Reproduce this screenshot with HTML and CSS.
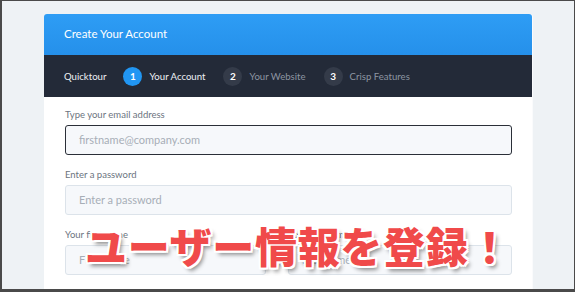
FILE: index.html
```html
<!DOCTYPE html>
<html lang="ja">
<head>
<meta charset="utf-8">
<link rel="stylesheet" href="styles.css">
</head>
<body>
<div class="frame">
  <div class="card">
    <div class="card-head">Create Your Account</div>
    <nav class="steps">
      <span class="step-title">Quicktour</span>
      <span class="step active"><span class="num">1</span>Your Account</span>
      <span class="step"><span class="num">2</span>Your Website</span>
      <span class="step"><span class="num">3</span>Crisp Features</span>
    </nav>
    <div class="form">
      <label class="label">Type your email address</label>
      <div class="input focus">firstname@company.com</div>
      <label class="label">Enter a password</label>
      <div class="input">Enter a password</div>
      <div class="row">
        <div class="col col-first">
          <label class="label">Your first name</label>
          <div class="input">First name</div>
        </div>
        <div class="col col-last">
          <label class="label">Your last name</label>
          <div class="input">Last name</div>
        </div>
      </div>
    </div>
  </div>
  <div class="overlay">ユーザー情報を登録！</div>
</div>
</body>
</html>
```
FILE: styles.css
```css
html, body { margin: 0; padding: 0; }
body {
  width: 575px;
  height: 292px;
  overflow: hidden;
  background: #4a4a4a;
  font-family: "Lato", "Open Sans", sans-serif;
}
.frame {
  position: relative;
  box-sizing: border-box;
  width: 572px;
  height: 288px;
  margin: 1px 1px 0 2px;
  background: #eef2f5;
  padding: 13px 0 0 42px;
  overflow: hidden;
}
.card {
  width: 488px;
  height: 300px;
  background: #fff;
  border-radius: 3px 3px 0 0;
  overflow: hidden;
  box-shadow: 1px 0 0 #fafbfc;
}
.card-head {
  height: 41px;
  box-sizing: border-box;
  padding: 13px 0 0 20px;
  background: linear-gradient(#2e9df5, #2590ea);
  color: #fff;
  font-size: 11.5px;
  line-height: 14px;
}
.steps {
  height: 42px;
  background: #232a38;
  display: flex;
  align-items: center;
  padding-left: 20px;
  font-size: 9.6px;
  color: #8d95a2;
}
.step-title { color: #eef1f5; margin-right: 17px; }
.step { display: flex; align-items: center; margin-right: 18px; }
.step.active { color: #eef1f5; }
.num {
  width: 19px;
  height: 19px;
  border-radius: 50%;
  background: #343b49;
  color: #fff;
  font-weight: 700;
  font-size: 10px;
  display: flex;
  align-items: center;
  justify-content: center;
  margin-right: 7px;
}
.active .num { background: #2196f3; }
.form { padding: 11px 20px 0 21px; }
.label {
  display: block;
  font-size: 9.5px;
  line-height: 14px;
  color: #6c7480;
  margin-bottom: 3px;
}
.input {
  box-sizing: border-box;
  height: 30px;
  border: 1px solid #dce3ea;
  border-radius: 3px;
  background: #f6f8fb;
  padding-left: 13px;
  font-size: 11px;
  line-height: 28px;
  color: #a7aeb7;
  margin-bottom: 13px;
}
.input.focus { border-color: #2a2f38; }
.row { display: flex; gap: 22px; }
.col-first { width: 201px; }
.col-last { flex: 1; }
.overlay {
  position: absolute;
  left: 83px;
  top: 214px;
  font-family: "Noto Sans CJK JP", sans-serif;
  font-weight: 900;
  font-size: 42px;
  line-height: 60px;
  color: #f04a4a;
  letter-spacing: 0.7px;
  text-shadow:
    2px 0 0 #fff, -2px 0 0 #fff, 0 2px 0 #fff, 0 -2px 0 #fff,
    2px 2px 0 #fff, -2px -2px 0 #fff, 2px -2px 0 #fff, -2px 2px 0 #fff,
    3px 4px 4px rgba(0,0,0,0.45);
}
```
